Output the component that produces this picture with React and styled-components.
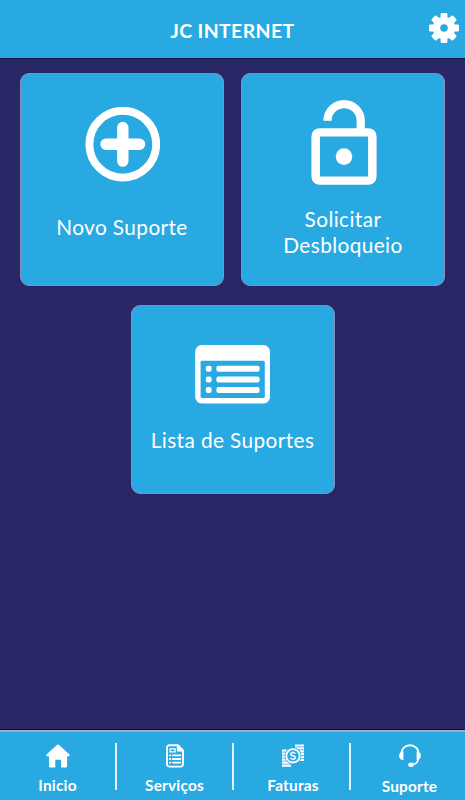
import React from 'react'
import styled, { createGlobalStyle } from 'styled-components'

const blue = '#29a9e1'
const navy = '#292766'

const GlobalStyle = createGlobalStyle`
  * {
    box-sizing: border-box;
  }
  body {
    margin: 0;
    background: ${navy};
    font-family: Lato, 'Open Sans', sans-serif;
    color: #ffffff;
  }
`

const IconGear = () => (
  <svg width="30" height="30" viewBox="-15 -15 30 30" fill="#fff">
    <circle r="11.2" />
    {[0, 45, 90, 135].map(angle => (
      <rect
        key={angle}
        x="-3.4"
        y="-15"
        width="6.8"
        height="30"
        rx="1.2"
        transform={`rotate(${angle})`}
      />
    ))}
    <circle r="3.8" fill={blue} />
  </svg>
)

const IconPlus = () => (
  <svg width="76" height="75" viewBox="0 0 76 75" fill="none" stroke="#fff">
    <circle cx="38.8" cy="37.2" r="33.4" strokeWidth="7.9" />
    <path d="M38.8 20.5v33.6M22 37.3h33.6" strokeWidth="11.4" strokeLinecap="round" />
  </svg>
)

const IconUnlock = () => (
  <svg width="68" height="85" viewBox="0 0 68 85" fill="none" stroke="#fff" strokeWidth="8.2">
    <path d="M18.5 20.7a16.6 16.6 0 0 1 33.2 0V30" />
    <path
      fill="#fff"
      fillRule="evenodd"
      stroke="none"
      d="M10.6 28.2h48.8a8.2 8.2 0 0 1 8.2 8.2v40.2a8.2 8.2 0 0 1-8.2 8.2H10.6a8.2 8.2 0 0 1-8.2-8.2V36.4a8.2 8.2 0 0 1 8.2-8.2zM10.9 36.6v39.8h48.2V36.6z"
    />
    <circle cx="35" cy="56.6" r="8.3" fill="#fff" stroke="none" />
  </svg>
)

const IconList = () => (
  <svg width="75" height="59" viewBox="0 0 75 59" fill="#fff">
    <rect x="0.2" width="74.8" height="58.4" rx="6.5" />
    <rect x="5.6" y="15.7" width="64.2" height="37.4" rx="1.5" fill={blue} />
    {[23.8, 34.4, 45].map(y => (
      <g key={y}>
        <rect x="10.8" y={y - 3} width="5.8" height="6" rx="2" />
        <rect x="21.4" y={y - 3} width="43.2" height="6" rx="2" />
      </g>
    ))}
  </svg>
)

const IconHome = () => (
  <svg width="24" height="24" viewBox="0 0 24 24" fill="#fff">
    <path d="M11.2.8a1.2 1.2 0 0 1 1.6 0L23.5 10.6c.6.7.3 1.6-.6 1.6h-1.8v10.1c0 .7-.4 1.1-1.1 1.1h-4.9v-7.6H9.3v7.6H4.1c-.7 0-1.1-.4-1.1-1.1V12.2H1.1c-.9 0-1.2-.9-.6-1.6z" />
  </svg>
)

const IconDocument = () => (
  <svg width="18" height="24" viewBox="0 0 18 24" fill="none" stroke="#fff">
    <path d="M3.4 1.2h8.6l5 5.1v13.9a2.4 2.4 0 0 1-2.4 2.4H3.4A2.4 2.4 0 0 1 1 20.2V3.6a2.4 2.4 0 0 1 2.4-2.4z" strokeWidth="1.9" />
    <path d="M11.3 1.5v5.6h5.4z" fill="#fff" />
    <path d="M4 4.9h5.2v3H4z" strokeWidth="1.2" />
    <path d="M6.2 11.3h8.8M6.2 15h8.8M6.2 18.7h8.8" strokeWidth="1.8" />
    <path d="M3.2 11.3h1.9M3.2 15h1.9M3.2 18.7h1.9" strokeWidth="1.8" />
  </svg>
)

const IconMoney = () => (
  <svg width="22" height="24" viewBox="0 0 22 24" stroke="#fff" fill="none">
    <path d="M13 1.5h9M13 4.4h9M13 7.3h9M13 10.2h9M13 13.1h9M13 16h9" strokeWidth="2.2" />
    <path d="M0 6.6h9M0 9.6h9M0 12.6h9M0 15.6h9M0 18.6h9M0 21.6h9" strokeWidth="2.2" />
    <circle cx="11" cy="11.8" r="8.4" fill={blue} stroke="none" />
    <circle cx="11" cy="11.8" r="6.7" strokeWidth="1.8" />
    <path d="M13.3 9.7c-.5-.9-1.3-1.1-2.3-1.1-1.4 0-2.3.6-2.3 1.6 0 2.3 4.7.9 4.7 3.3 0 1-1 1.6-2.4 1.6-1.2 0-2.1-.4-2.5-1.3" strokeWidth="1.4" />
    <path d="M11 7.4v1.4M11 15v1.3" strokeWidth="1.2" />
  </svg>
)

const IconHeadset = () => (
  <svg width="22" height="24" viewBox="0 0 22 24" fill="none" stroke="#fff">
    <path d="M2.4 10C2.4 4.8 6 1.2 11 1.2S19.6 4.8 19.6 10" strokeWidth="2" />
    <path d="M19.3 14c0 4-2.2 6.4-7 6.7" strokeWidth="1.5" />
    <path d="M4.4 7.6v8.4C1.6 16 .1 14.4.1 11.8s1.5-4.2 4.3-4.2zM17.6 7.6v8.4c2.8 0 4.3-1.6 4.3-4.2s-1.5-4.2-4.3-4.2z" fill="#fff" stroke="none" />
    <ellipse cx="12" cy="20.7" rx="2.8" ry="2.2" fill="#fff" stroke="none" />
  </svg>
)

const App = () => (
  <Screen>
    <GlobalStyle />
    <Header>
      <Title>JC INTERNET</Title>
      <SettingsButton aria-label="Configurações">
        <IconGear />
      </SettingsButton>
    </Header>
    <Content>
      <Card height={213} iconTop={33}>
        <IconPlus />
        <CardLabel gap={32}>Novo Suporte</CardLabel>
      </Card>
      <Card height={213} iconTop={26}>
        <IconUnlock />
        <CardLabel gap={21}>Solicitar<br />Desbloqueio</CardLabel>
      </Card>
      <Card height={189} iconTop={39}>
        <IconList />
        <CardLabel gap={23}>Lista de Suportes</CardLabel>
      </Card>
    </Content>
    <Nav>
      <NavItem>
        <IconHome />
        <NavLabel>Inicio</NavLabel>
      </NavItem>
      <Divider />
      <NavItem>
        <IconDocument />
        <NavLabel>Serviços</NavLabel>
      </NavItem>
      <Divider />
      <NavItem shift={3}>
        <IconMoney />
        <NavLabel>Faturas</NavLabel>
      </NavItem>
      <Divider />
      <NavItem shift={3}>
        <IconHeadset />
        <NavLabel drop={1}>Suporte</NavLabel>
      </NavItem>
    </Nav>
  </Screen>
)

const Screen = styled.div`
  display: flex;
  flex-direction: column;
  width: 465px;
  height: 800px;
  overflow: hidden;
  background: ${navy};
`

const Header = styled.header`
  display: grid;
  grid-template-columns: 36px 1fr 36px;
  align-items: center;
  height: 58px;
  flex: none;
  background: ${blue};
  box-shadow: 0 1px 1px #15144b;
`

const Title = styled.h1`
  grid-column: 2;
  margin: 3px 0 0;
  font-size: 19.5px;
  line-height: 24px;
  font-weight: 700;
  letter-spacing: 0.35px;
  text-align: center;
`

const SettingsButton = styled.button`
  display: flex;
  padding: 0;
  margin: -2px 0 0;
  border: 0;
  background: none;
`

const Content = styled.main`
  flex: 1;
  display: flex;
  flex-wrap: wrap;
  justify-content: center;
  align-content: flex-start;
  gap: 19px 17px;
  padding-top: 15px;
`

const Card = styled.section.withConfig({
  shouldForwardProp: prop => !['height', 'iconTop'].includes(prop),
})`
  display: flex;
  flex-direction: column;
  align-items: center;
  width: 204px;
  height: ${props => props.height}px;
  padding-top: ${props => props.iconTop}px;
  background: ${blue};
  border: 1px solid #8a91bd;
  border-radius: 9px;
  box-shadow: 0 0 1px #100e59;
`

const CardLabel = styled.span.withConfig({
  shouldForwardProp: prop => prop !== 'gap',
})`
  margin-top: ${props => props.gap}px;
  font-size: 20.8px;
  line-height: 26px;
  letter-spacing: 0.4px;
  text-align: center;
`

const Nav = styled.nav`
  display: grid;
  grid-template-columns: 115px 2px 115px 2px 115px 2px 1fr;
  flex: none;
  height: 70px;
  background: ${blue};
  border-top: 2px solid #a3a9c2;
  box-shadow: 0 -1px 0 #100c52;
`

const NavItem = styled.div.withConfig({
  shouldForwardProp: prop => prop !== 'shift',
})`
  display: flex;
  flex-direction: column;
  align-items: center;
  padding-top: 12px;
  padding-left: ${props => props.shift || 0}px;
`

const NavLabel = styled.span.withConfig({
  shouldForwardProp: prop => prop !== 'drop',
})`
  margin-top: ${props => 8 + (props.drop || 0)}px;
  font-size: 15.4px;
  line-height: 18px;
  font-weight: 700;
  letter-spacing: 0.2px;
`

const Divider = styled.div`
  height: 47px;
  margin-top: 11px;
  background: #e4f5fd;
`

export default App
